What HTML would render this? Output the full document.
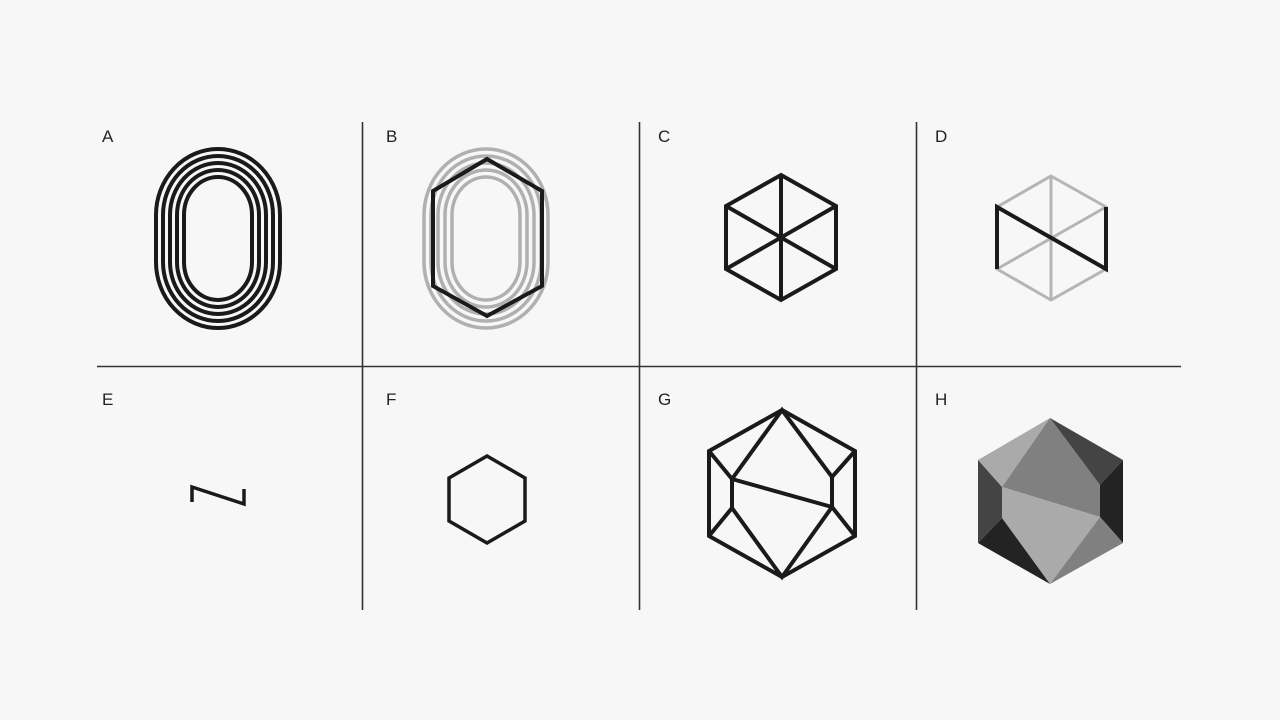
<!DOCTYPE html>
<html><head><meta charset="utf-8"><style>
html,body{margin:0;padding:0;background:#f7f7f7;}
svg{display:block}
text{font-family:"Liberation Sans",sans-serif;font-size:17px;fill:#222}
</style></head><body>
<svg width="1280" height="720" viewBox="0 0 1280 720">
<rect width="1280" height="720" fill="#f7f7f7"/>
<g stroke="#333" stroke-width="1.6">
<line x1="97" y1="366.5" x2="1181" y2="366.5"/>
<line x1="362.5" y1="122" x2="362.5" y2="610"/>
<line x1="639.5" y1="122" x2="639.5" y2="610"/>
<line x1="916.5" y1="122" x2="916.5" y2="610"/>
</g>
<text x="102" y="142">A</text><text x="386" y="142">B</text><text x="658" y="142">C</text><text x="935" y="142">D</text>
<text x="102" y="405">E</text><text x="386" y="405">F</text><text x="658" y="405">G</text><text x="935" y="405">H</text>
<!-- A -->
<g fill="none" stroke="#1a1a1a" stroke-width="4">
<rect x="156" y="149" width="124" height="179" rx="62" ry="66"/>
<rect x="163" y="156" width="110" height="165" rx="55" ry="59"/>
<rect x="170" y="163" width="96" height="151" rx="48" ry="52"/>
<rect x="177" y="170" width="82" height="137" rx="41" ry="45"/>
<rect x="184" y="177" width="68" height="123" rx="34" ry="38"/>
</g>
<!-- B -->
<g fill="none" stroke="#b0b0b0" stroke-width="3.5">
<rect x="424" y="149" width="124" height="179" rx="62" ry="66"/>
<rect x="431" y="156" width="110" height="165" rx="55" ry="59"/>
<rect x="438" y="163" width="96" height="151" rx="48" ry="52"/>
<rect x="445" y="170" width="82" height="137" rx="41" ry="45"/>
<rect x="452" y="177" width="68" height="123" rx="34" ry="38"/>
</g>
<polygon points="487,159 542,191 542,286 487,316 433,286 433,191" fill="none" stroke="#1a1a1a" stroke-width="4" stroke-linejoin="miter"/>
<!-- C -->
<g fill="none" stroke="#1a1a1a" stroke-width="4">
<polygon points="781,175 836,206 836,269 781,300 726,269 726,206"/>
<line x1="781" y1="175" x2="781" y2="300"/>
<line x1="726" y1="206" x2="836" y2="269"/>
<line x1="836" y1="206" x2="726" y2="269"/>
</g>
<!-- D -->
<g fill="none" stroke="#b5b5b5" stroke-width="3">
<polygon points="1051,176 1106,207 1106,269 1051,300 997,269 997,207"/>
<line x1="1051" y1="176" x2="1051" y2="300"/>
<line x1="1106" y1="207" x2="997" y2="269"/>
</g>
<polyline points="997,269 997,207 1106,269 1106,207" fill="none" stroke="#1a1a1a" stroke-width="4"/>
<!-- E -->
<polyline points="192,502 192,487 244,504 244,489" fill="none" stroke="#1a1a1a" stroke-width="3.5"/>
<!-- F -->
<polygon points="487,456 525,478 525,521 487,543 449,521 449,478" fill="none" stroke="#1a1a1a" stroke-width="3.5"/>
<!-- G -->
<g fill="none" stroke="#1a1a1a" stroke-width="4" stroke-linejoin="miter">
<polygon points="782,410 855,451 855,536 782,577 709,536 709,451"/>
<polyline points="709,451 732,479 782,410 832,477 855,451"/>
<polyline points="709,536 732,508 782,577 832,507 855,536"/>
<line x1="732" y1="479" x2="732" y2="508"/>
<line x1="832" y1="477" x2="832" y2="507"/>
<line x1="732" y1="479" x2="832" y2="507"/>
</g>
<!-- H -->
<g>
<polygon points="1050,418 978,460 1002,487" fill="#aaaaaa"/>
<polygon points="1050,418 1100,485 1100,517 1002,487" fill="#808080"/>
<polygon points="1050,418 1123,460 1100,485" fill="#444444"/>
<polygon points="1123,460 1123,543 1100,517 1100,485" fill="#232323"/>
<polygon points="978,460 978,543 1002,518 1002,487" fill="#444444"/>
<polygon points="1002,487 1100,517 1050,584 1002,518" fill="#aaaaaa"/>
<polygon points="978,543 1050,584 1002,518" fill="#232323"/>
<polygon points="1100,517 1123,543 1050,584" fill="#808080"/>
</g>
</svg>
</body></html>
